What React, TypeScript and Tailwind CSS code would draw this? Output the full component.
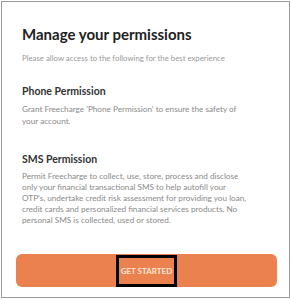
export default function App() {
  return (
    <div className="w-[291px] h-[300px] bg-white pl-px pt-px" style={{ fontFamily: 'Lato, "Noto Sans", sans-serif' }}>
      <div className="w-[289px] h-[297px] border border-[#9a9a9a] flex flex-col px-[20px]">
        <h1 className="mt-[22px] text-[15px] leading-[20px] font-bold text-[#222]">Manage your permissions</h1>
        <p className="mt-[9px] text-[7.8px] leading-[11px] text-[#9a9a9a]">Please allow access to the following for the best experience</p>
        <h2 className="mt-[21px] text-[10.5px] leading-[13px] font-bold text-[#333]">Phone Permission</h2>
        <p className="mt-[5px] max-w-[220px] text-[8.2px] leading-[12px] text-[#8a8a8a]">Grant Freecharge 'Phone Permission' to ensure the safety of your account.</p>
        <h2 className="mt-[26px] text-[10.5px] leading-[13px] font-bold text-[#333]">SMS Permission</h2>
        <p className="mt-[5px] max-w-[228px] text-[8.2px] leading-[11px] text-[#8a8a8a]">Permit Freecharge to collect, use, store, process and disclose only your financial transactional SMS to help autofill your OTP's, undertake credit risk assessment for providing you loan, credit cards and personalized financial services products. No personal SMS is collected, used or stored.</p>
        <div className="mt-auto mb-[10px] -ml-[6px] -mr-[8px] h-[33px] rounded-[6px] bg-[#ec8150] flex items-center justify-center">
          <div className="h-[32px] w-[61px] border-[3px] border-black flex items-center justify-center">
            <span className="text-[8px] font-bold text-[#fde7d8]">GET STARTED</span>
          </div>
        </div>
      </div>
    </div>
  );
}
